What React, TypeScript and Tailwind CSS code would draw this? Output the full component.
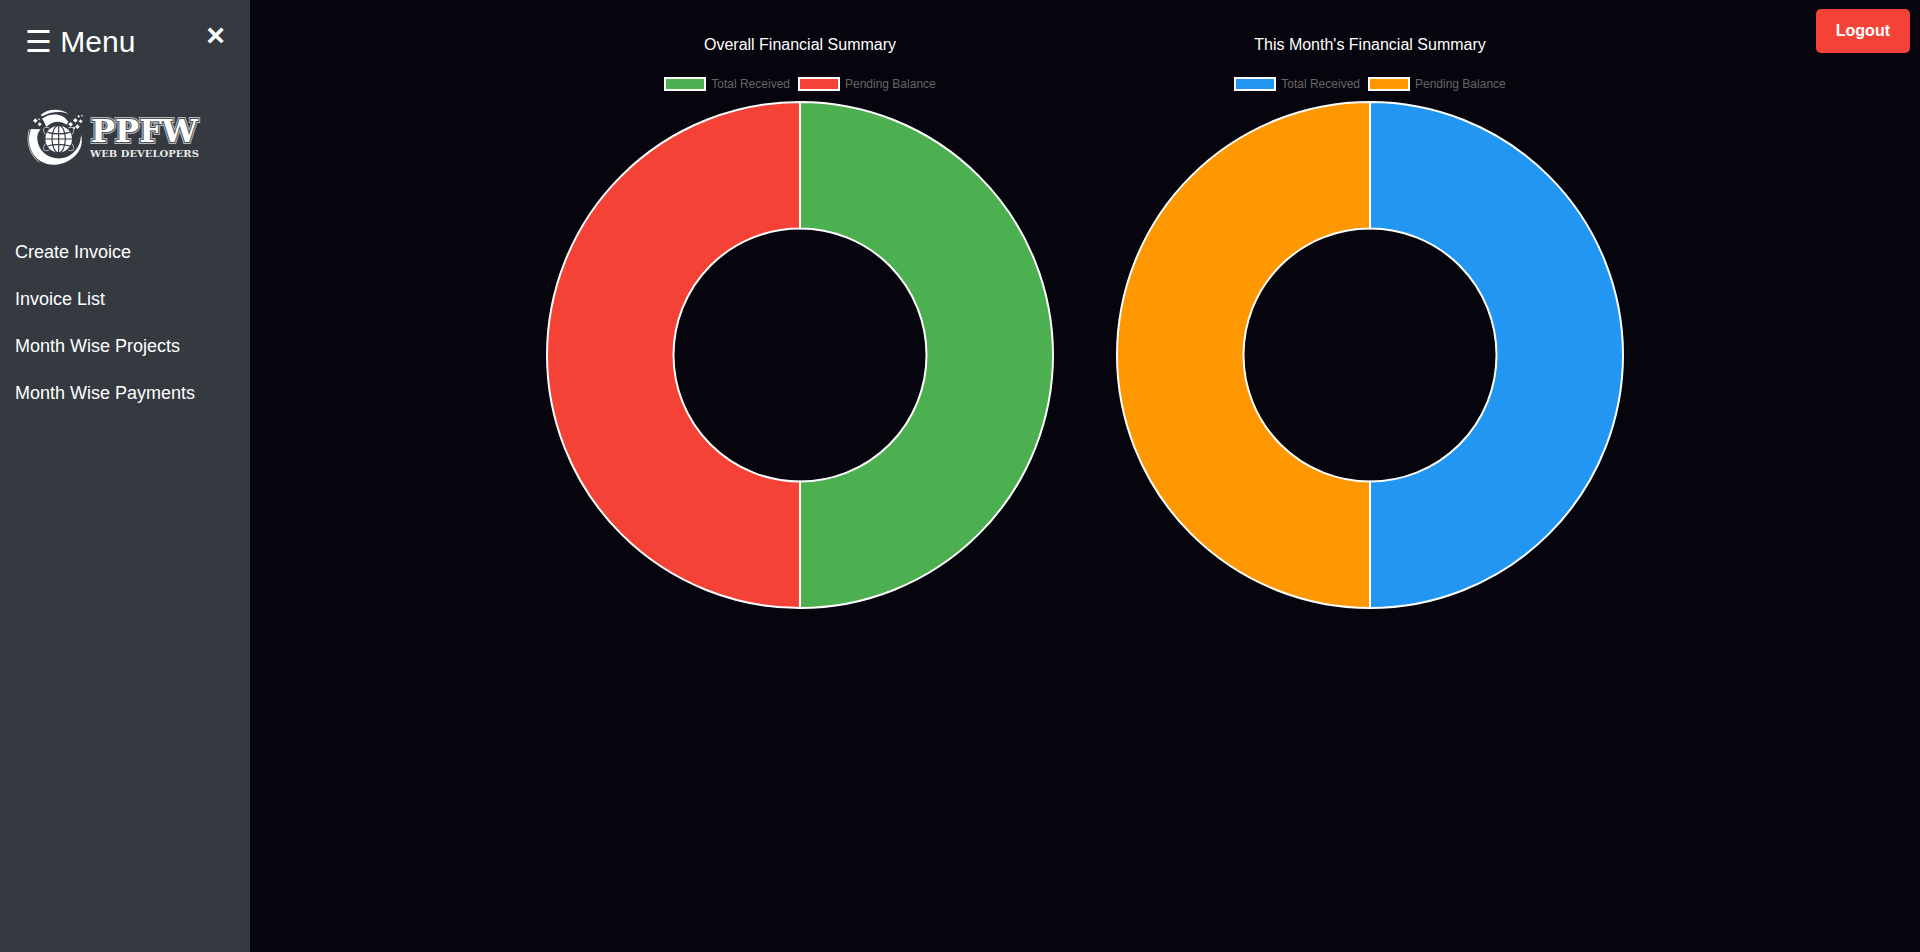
type Slice = { label: string; color: string };

type Summary = { title: string; slices: [Slice, Slice] };

const summaries: Summary[] = [
  {
    title: "Overall Financial Summary",
    slices: [
      { label: "Total Received", color: "#4caf50" },
      { label: "Pending Balance", color: "#f44336" },
    ],
  },
  {
    title: "This Month's Financial Summary",
    slices: [
      { label: "Total Received", color: "#2196f3" },
      { label: "Pending Balance", color: "#ff9800" },
    ],
  },
];

const links = ["Create Invoice", "Invoice List", "Month Wise Projects", "Month Wise Payments"];

function Logo() {
  return (
    <svg viewBox="0 0 180 70" className="w-[180px]" role="img" aria-label="PPFW Web Developers">
      <g transform="translate(-4 -2) scale(0.33333)" fill="#fff">
        <path d="M33 87 C19 120 29 163 62 184 C104 208 160 189 181 145 C186 131 187 117 183 104 C183 139 160 170 123 175 C84 178 55 151 52 119 C51 106 54 96 62 88 Z" />
        <path d="M28 88 C17 126 29 165 58 187" fill="none" stroke="#fff" strokeWidth="2" />
        <path d="M62 45 C82 27 117 23 146 41 C120 32 91 35 66 49 Z" />
        <path d="M66 56 C90 38 130 38 145 66 L140 74 C121 61 98 62 80 80 C75 76 76 68 66 56 Z" />
        <circle cx="116" cy="117" r="40" />
        <g fill="none" stroke="#343a40" strokeWidth="3.5">
          <path d="M116 76 V158 M75 117 H157 M82 97 Q116 106 150 97 M82 138 Q116 128 150 138" />
          <ellipse cx="116" cy="117" rx="20" ry="41" />
        </g>
        <g fill="none" stroke="#fff" strokeWidth="2">
          <path d="M88 84 C68 77 67 90 76 104 M144 84 C164 77 165 90 156 104 M88 150 C68 157 67 145 76 131 M144 150 C164 157 165 145 156 131" />
        </g>
        <path d="M46 55 l7 7 -7 7 -7 -7z M59 67 l6 6 -6 6 -6 -6z M57 55 l3 3 -3 3 -3 -3z" />
        <path d="M152 66 l7 7 -7 7 -7 -7z M166 54 l7 7 -7 7 -7 -7z M172 73 l7 7 -7 7 -7 -7z M182 58 l6 6 -6 6 -6 -6z M176 45 l4 4 -4 4 -4 -4z M186 44 l3 3 -3 3 -3 -3z M162 80 l4 4 -4 4 -4 -4z" />
      </g>
      <g fontFamily="'DejaVu Serif', serif" fontWeight="700">
        <g fontSize="32">
          <text x="67" y="40" fill="#fff" stroke="#b4b8ba" strokeWidth="4">PPFW</text>
          <text x="67" y="40" fill="#fff" stroke="#4b5157" strokeWidth="2">PPFW</text>
          <text x="67" y="40" fill="#fff">PPFW</text>
        </g>
        <text x="66" y="55" fontSize="10" fill="#e8e9ea">WEB DEVELOPERS</text>
      </g>
    </svg>
  );
}

function Doughnut({ title, slices }: Summary) {
  const [right, left] = slices;
  return (
    <svg viewBox="0 0 508 508" className="block w-full" role="img" aria-label={title}>
      <g stroke="#fff" strokeWidth="2">
        <path d="M254 1 A253 253 0 0 1 254 507 V380.5 A126.5 126.5 0 0 0 254 127.5 Z" fill={right.color} />
        <path d="M254 507 A253 253 0 0 1 254 1 V127.5 A126.5 126.5 0 0 0 254 380.5 Z" fill={left.color} />
      </g>
    </svg>
  );
}

function SummaryCard(summary: Summary) {
  return (
    <section className="flex w-full max-w-[508px] flex-col">
      <h2 className="text-center text-base leading-6">{summary.title}</h2>
      <ul className="mt-[17px] flex h-5 items-center justify-center gap-2 text-xs text-[#666666]">
        {summary.slices.map((slice) => (
          <li key={slice.label} className="flex items-center gap-[5px]">
            <span
              className="h-[14px] w-[42px] border-2 border-white"
              style={{ backgroundColor: slice.color }}
            />
            {slice.label}
          </li>
        ))}
      </ul>
      <div className="mt-[7px]">
        <Doughnut {...summary} />
      </div>
    </section>
  );
}

export default function App() {
  return (
    <div className="flex min-h-screen bg-[#06040d] font-['Liberation_Sans',Arial,sans-serif] text-white">
      <aside className="w-[250px] shrink-0 bg-[#343a40]">
        <div className="flex items-start justify-between px-[25px] pt-[19px]">
          <h1 className="text-[30px] leading-[46px]">☰ Menu</h1>
          <button type="button" aria-label="Close menu" className="text-[32px] leading-8 font-bold">
            ×
          </button>
        </div>
        <div className="px-6 pt-[37px]">
          <Logo />
        </div>
        <nav className="mt-[57px] flex flex-col">
          {links.map((link) => (
            <a key={link} href="#" className="px-[15px] py-[13px] text-lg leading-[21px]">
              {link}
            </a>
          ))}
        </nav>
      </aside>
      <main className="relative flex flex-1 items-start justify-center gap-[62px] pt-[33px]">
        {summaries.map((summary) => (
          <SummaryCard key={summary.title} {...summary} />
        ))}
        <button
          type="button"
          className="absolute top-[9px] right-[10px] rounded-[5px] bg-[#f44336] px-5 py-[10px] text-base font-bold"
        >
          Logout
        </button>
      </main>
    </div>
  );
}
